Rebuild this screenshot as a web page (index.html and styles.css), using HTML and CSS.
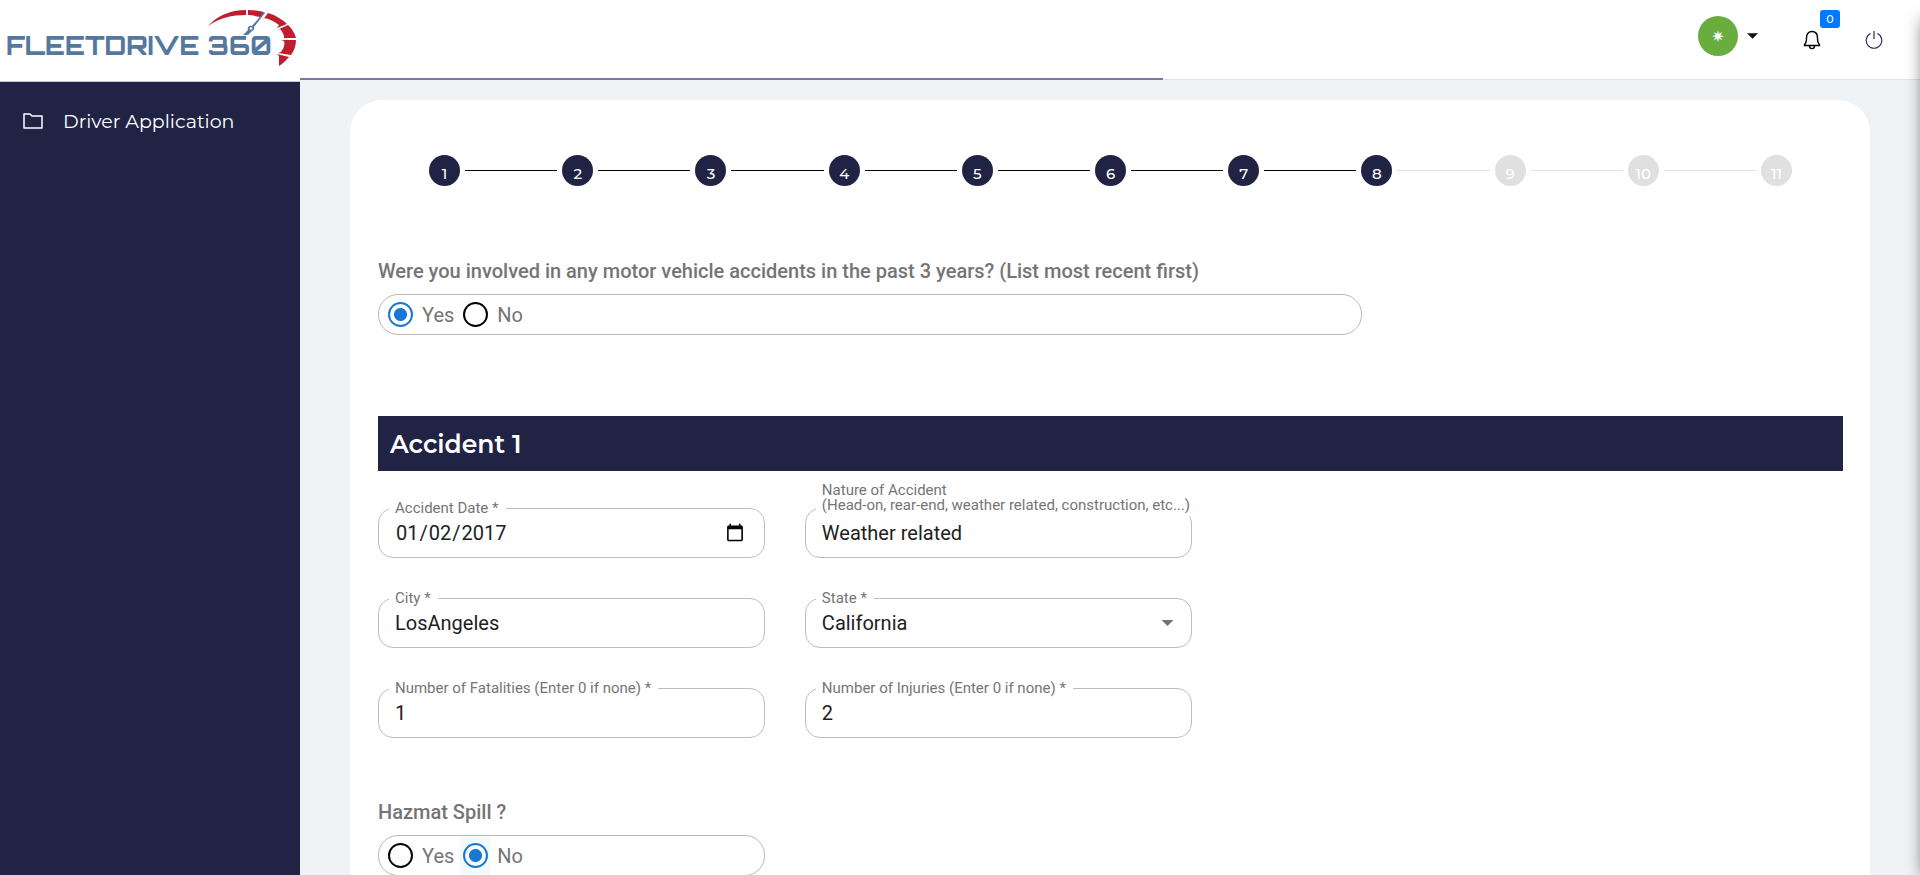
FILE: index.html
```html
<!DOCTYPE html>
<html lang="en">
<head>
<meta charset="utf-8">
<title>FleetDrive 360 - Driver Application</title>
<link rel="stylesheet" href="styles.css">
</head>
<body>
<div class="layout">
  <aside class="sidebar">
    <a class="brand" href="#" aria-label="FleetDrive 360">
      <svg class="brand-logo" viewBox="0 0 300 81" role="img" aria-hidden="true">
        <text class="brand-text" x="6" y="55">FLEETDRIVE 360</text>
        <path fill="#be1e2d" d="M208 26 C217 16 230 10 246 10 V15 C232 15 219 18 208 26Z M248 10 C254 10 259 11 264 12 L260 17 C256 16 252 15 248 15Z M268 13 C275 15 282 19 287 24 L277 28 L279 25 C275 22 270 19 264 18 L262 21Z M288 25 C293 30 295 34 296 38 H284 L284 36 C283 33 282 31 280 29 L277 30Z M296 40 C296 46 294 51 291 55 L278 53 L281 52 C284 48 285 44 284 41 L281 40Z M289 57 C286 60 284 63 279 66 V56 L277 54Z"/>
        <path fill="#55789f" d="M264 12 L265 13 L254 27 A3 3 0 0 1 252 31 L248 35 H243 L248 30 A3 3 0 0 1 252 26Z"/>
        <circle cx="251" cy="28.500" r="1.300" fill="#fff"/>
      </svg>
    </a>
    <nav class="menu">
      <a class="menu-link" href="#">
        <svg class="menu-icon" viewBox="0 0 22 16" aria-hidden="true"><path d="M2 1H8L10 3H20V15H2Z" fill="none" stroke="currentColor" stroke-width="1.500" stroke-linejoin="round"/></svg>
        Driver Application
      </a>
    </nav>
  </aside>

  <div class="page">
    <header class="topbar">
      <button class="account" type="button" aria-label="Account menu">
        <span class="avatar">✷</span>
        <svg class="caret" viewBox="0 0 12 6" aria-hidden="true"><path d="M0 0H12L6 6Z" fill="#111"/></svg>
      </button>
      <button class="icon-button" type="button" aria-label="Notifications">
        <svg class="bell" viewBox="0 0 18 20" aria-hidden="true"><path d="M1.500 15.500V14.500C3.500 13 3.500 11 3.500 8C3.500 4 5.500 1.500 9 1.500S14.500 4 14.500 8C14.500 11 14.500 13 16.500 14.500V15.500ZM6.500 16C6.500 19.500 11.500 19.500 11.500 16" fill="none" stroke="#000" stroke-width="1.400"/></svg>
        <span class="badge">0</span>
      </button>
      <button class="icon-button" type="button" aria-label="Log out">
        <svg class="power" viewBox="0 0 18 20" aria-hidden="true"><path d="M9 1V9M5.500 3.500A7.800 7.800 0 1 0 12.500 3.500" fill="none" stroke="#2b2d63" stroke-width="1.200"/></svg>
      </button>
      <div class="progress"></div>
    </header>

    <main class="card">
      <ol class="stepper">
        <li class="step done"><span class="dot">1</span></li>
        <li class="step done"><span class="dot">2</span></li>
        <li class="step done"><span class="dot">3</span></li>
        <li class="step done"><span class="dot">4</span></li>
        <li class="step done"><span class="dot">5</span></li>
        <li class="step done"><span class="dot">6</span></li>
        <li class="step done"><span class="dot">7</span></li>
        <li class="step done current"><span class="dot">8</span></li>
        <li class="step"><span class="dot">9</span></li>
        <li class="step"><span class="dot">10</span></li>
        <li class="step"><span class="dot">11</span></li>
      </ol>

      <form class="form">
        <section class="question form-width">
          <h2 class="question-title" id="q-accidents">Were you involved in any motor vehicle accidents in the past 3 years? (List most recent first)</h2>
          <div class="choices" role="radiogroup" aria-labelledby="q-accidents">
            <label class="choice"><span class="radio-wrap"><input class="radio" type="radio" name="accidents" checked></span>Yes</label>
            <label class="choice"><span class="radio-wrap"><input class="radio" type="radio" name="accidents"></span>No</label>
          </div>
        </section>

        <h1 class="section-title">Accident 1</h1>

        <div class="fields form-width">
          <fieldset class="field first">
            <legend class="field-legend"><label for="date">Accident Date *</label></legend>
            <input class="control" id="date" type="date" value="2017-01-02">
          </fieldset>
          <fieldset class="field">
            <legend class="field-legend tall"><label for="nature">Nature of Accident<br>(Head-on, rear-end, weather related, construction, etc...)</label></legend>
            <input class="control" id="nature" type="text" value="Weather related">
          </fieldset>
          <fieldset class="field first">
            <legend class="field-legend"><label for="city">City *</label></legend>
            <input class="control" id="city" type="text" value="LosAngeles">
          </fieldset>
          <fieldset class="field">
            <legend class="field-legend"><label for="state">State *</label></legend>
            <div class="select-wrap">
              <select class="control" id="state"><option>California</option></select>
              <svg class="select-arrow" viewBox="0 0 12 6" aria-hidden="true"><path d="M0 0H12L6 6Z" fill="#757575"/></svg>
            </div>
          </fieldset>
          <fieldset class="field first">
            <legend class="field-legend"><label for="fatalities">Number of Fatalities (Enter 0 if none) *</label></legend>
            <input class="control" id="fatalities" type="text" value="1">
          </fieldset>
          <fieldset class="field">
            <legend class="field-legend"><label for="injuries">Number of Injuries (Enter 0 if none) *</label></legend>
            <input class="control" id="injuries" type="text" value="2">
          </fieldset>

          <section class="question hazmat">
            <h2 class="question-title" id="q-hazmat">Hazmat Spill ?</h2>
            <div class="choices" role="radiogroup" aria-labelledby="q-hazmat">
              <label class="choice"><span class="radio-wrap"><input class="radio" type="radio" name="hazmat"></span>Yes</label>
              <label class="choice"><span class="radio-wrap focused"><input class="radio" type="radio" name="hazmat" checked></span>No</label>
            </div>
          </section>
        </div>
      </form>
    </main>
  </div>
</div>
<div class="drawer-edge"></div>
</body>
</html>
```
FILE: styles.css
```css
* {
  box-sizing: border-box;
}

body {
  margin: 0;
  background: #eff3f6;
  font-family: Roboto, "Liberation Sans", sans-serif;
  color: #757575;
}

button {
  padding: 0;
  border: 0;
  background: none;
  font: inherit;
}

.layout {
  display: flex;
  height: 100vh;
  overflow: hidden;
}

/* Sidebar */
.sidebar {
  flex: 0 0 300px;
  background: #202344;
  font-family: Montserrat, Inter, sans-serif;
}

.brand {
  display: block;
  height: 82px;
  background: #fff;
  border-bottom: 1px solid #c8c9d6;
}

.brand-logo {
  display: block;
  width: 300px;
  height: 81px;
}

.brand-text {
  font: 800 26px Orbitron, Montserrat, "DejaVu Sans", sans-serif;
  fill: #55789f;
}

.menu {
  padding: 23px 22px;
}

.menu-link {
  display: flex;
  align-items: center;
  gap: 19px;
  height: 32px;
  color: #fff;
  font-size: 19px;
  text-decoration: none;
}

.menu-icon {
  width: 22px;
  height: 16px;
}

/* Top bar */
.page {
  flex: 1;
  min-width: 0;
}

.topbar {
  position: relative;
  display: flex;
  justify-content: flex-end;
  align-items: center;
  gap: 44px;
  height: 80px;
  padding: 0 37px 0 0;
  background: #fff;
  border-bottom: 1px solid #dfe4e8;
}

.progress {
  position: absolute;
  left: 0;
  bottom: -1px;
  width: 53.3%;
  height: 2px;
  background: #7a78a8;
}

.account {
  display: flex;
  align-items: center;
  gap: 9px;
  margin: 0 1px 7px 0;
}

.avatar {
  display: grid;
  place-items: center;
  width: 40px;
  height: 40px;
  border-radius: 50%;
  background: #68ad3e;
  color: #fff;
  font: bold 16px "DejaVu Sans", sans-serif;
}

.caret {
  width: 11px;
  height: 6px;
}

.icon-button {
  position: relative;
  height: 20px;
}

.bell,
.power {
  display: block;
  width: 18px;
  height: 20px;
}

.badge {
  position: absolute;
  left: 17px;
  top: -20px;
  width: 20px;
  height: 18px;
  border-radius: 3px;
  background: #007bff;
  color: #fff;
  font: 500 11px/18px Montserrat, sans-serif;
  text-align: center;
}

/* Card */
.card {
  margin: 20px 50px 0;
  padding: 55px 27px 40px 28px;
  min-height: 100vh;
  border-radius: 32px 32px 0 0;
  background: #fff;
}

.stepper {
  display: flex;
  margin: 0;
  padding: 0;
  list-style: none;
}

.step {
  flex: 1;
  display: flex;
  align-items: center;
  gap: 5px;
  color: #e0e0e0;
}

.step::before,
.step::after {
  content: "";
  flex: 1;
  border-top: 1px solid #e0e0e0;
}

.step.done::before,
.step.done:not(.current)::after {
  border-color: #000;
}

.step:first-child::before,
.step:last-child::after {
  visibility: hidden;
}

.dot {
  width: 31px;
  height: 31px;
  padding-top: 3px;
  border-radius: 50%;
  background: #e0e0e0;
  color: #fff;
  font: 500 15px/31px Montserrat, Inter, sans-serif;
  text-align: center;
}

.done .dot {
  background: #202344;
}

/* Form */
.form-width {
  width: 67.2%;
}

.form {
  padding-top: 73px;
}

.question-title {
  margin: 0 0 11px;
  font-size: 20px;
  font-weight: 500;
  line-height: 24px;
}

.choices {
  display: flex;
  align-items: center;
  gap: 6px;
  height: 41px;
  padding: 0 6px;
  border: 1px solid #b8b8b8;
  border-radius: 20px;
}

.choice {
  display: flex;
  align-items: center;
  gap: 7px;
  font-size: 20px;
}

.radio-wrap {
  display: grid;
  place-items: center;
  width: 30px;
  height: 39px;
}

.radio-wrap.focused {
  background: #f4f9fd;
}

.radio {
  appearance: none;
  width: 25px;
  height: 25px;
  margin: 0;
  border: 2px solid #000;
  border-radius: 50%;
}

.radio:checked {
  border-color: #1976d2;
  background: radial-gradient(circle, #1976d2 6px, transparent 7px);
}

.section-title {
  margin: 81px 0 30px;
  padding: 2px 12px 0;
  background: #202344;
  color: #fff;
  font: 600 25px/53px Montserrat, Inter, sans-serif;
}

.fields {
  display: grid;
  grid-template-columns: repeat(12, 1fr);
  gap: 33px 40px;
}

.field {
  grid-column: span 5;
  min-width: 0;
  height: 57px;
  margin: 0;
  padding: 0;
  border: 1px solid #bdbdbd;
  border-radius: 15px;
}

.field.first {
  grid-column: 1 / span 5;
}

.field-legend {
  display: flex;
  align-items: flex-end;
  height: 15px;
  margin: 0 17px 0 10px;
  padding: 0 7px 0 6px;
  font-size: 15px;
  line-height: 15px;
  white-space: nowrap;
}

.field-legend.tall {
  padding-bottom: 3px;
}

.control {
  display: block;
  width: 100%;
  height: 34px;
  padding: 0 17px 0 16px;
  border: 0;
  outline: 0;
  background: none;
  color: #212121;
  font: 20px Roboto, sans-serif;
  appearance: none;
}

.select-wrap {
  position: relative;
}

.select-arrow {
  position: absolute;
  right: 17px;
  top: 14px;
  width: 13px;
  height: 6px;
}

.hazmat {
  grid-column: 1 / span 5;
  padding-top: 29px;
}

.drawer-edge {
  position: fixed;
  top: 20px;
  bottom: 0;
  right: -22px;
  width: 20px;
  box-shadow: 0 0 16px rgba(0, 0, 0, 0.5);
}
```
